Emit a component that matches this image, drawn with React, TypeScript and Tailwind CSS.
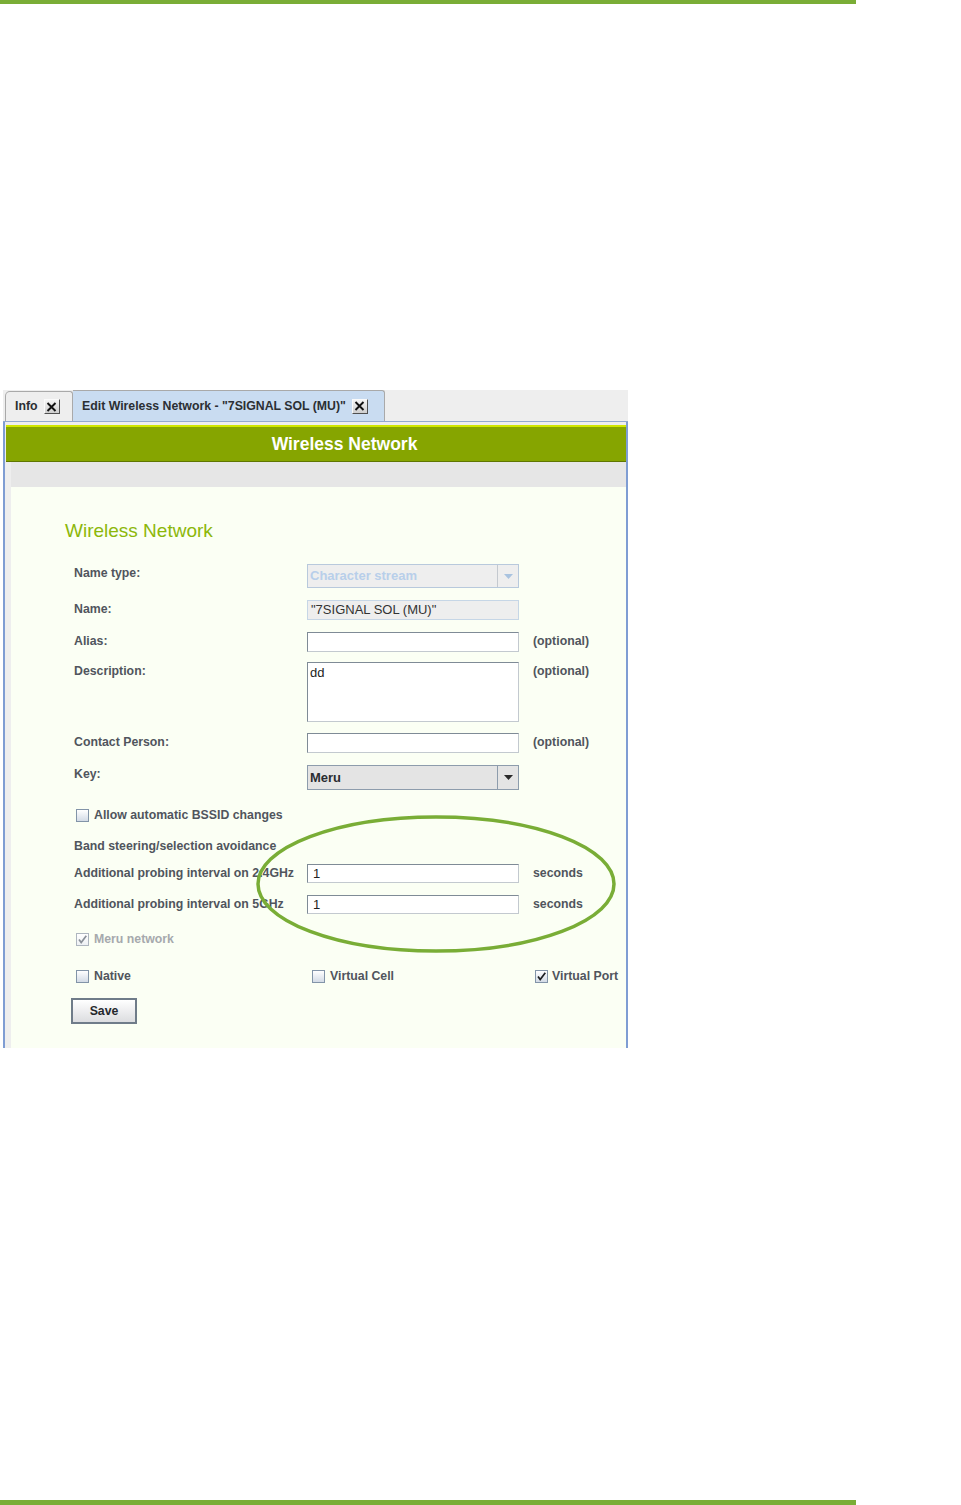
const font = { fontFamily: '"Liberation Sans", Arial, sans-serif' };

function CloseBox() {
  return (
    <span className="inline-flex items-center justify-center w-[16px] h-[15px] bg-linear-to-b from-[#f4f4f4] to-[#cfcfcf] border border-t-[#fafafa] border-l-[#fafafa] border-b-[#505050] border-r-[#505050]">
      <svg width="11" height="10" viewBox="0 0 11 10">
        <path d="M1.5 1 L9.5 9 M9.5 1 L1.5 9" stroke="#111" strokeWidth="1.9" />
      </svg>
    </span>
  );
}

function Check({ disabled }: { disabled?: boolean }) {
  return (
    <svg width="11" height="11" viewBox="0 0 11 11">
      <path d="M2 5.5 L4.2 8.5 L9.3 1.8" fill="none" stroke={disabled ? '#8a9098' : '#1d1f22'} strokeWidth="1.7" />
    </svg>
  );
}

function Box({ checked, disabled }: { checked?: boolean; disabled?: boolean }) {
  return (
    <span
      className={
        'inline-flex items-center justify-center w-[13px] h-[13px] border ' +
        (disabled
          ? 'border-[#aeb6bf] bg-linear-to-b from-white to-[#eef1f4]'
          : 'border-[#8294a8] bg-linear-to-b from-white to-[#d3dbe6]')
      }
    >
      {checked && <Check disabled={disabled} />}
    </span>
  );
}

function Field({ children, h = 'h-[20px]' }: { children?: React.ReactNode; h?: string }) {
  return (
    <div className={`w-[212px] ${h} bg-white border border-t-[#7f8b96] border-l-[#7f8b96] border-b-[#c3c9cf] border-r-[#c3c9cf] px-[4px] text-[13px] text-[#222] leading-[18px]`}>
      {children}
    </div>
  );
}

function Row({ label, children, note, className = '' }: { label: string; children: React.ReactNode; note?: string; className?: string }) {
  return (
    <div className={`flex items-start ${className}`}>
      <div className="w-[233px] leading-[18px]">{label}</div>
      {children}
      {note && <div className="ml-[14px] leading-[18px]">{note}</div>}
    </div>
  );
}

export default function App() {
  return (
    <div className="w-[961px] h-[1505px] bg-white flex flex-col" style={font}>
      <div className="w-[856px] h-[4px] bg-[#7aad36]" />

      <div className="relative w-[625px] h-[658px] ml-[3px] mt-[386px] bg-[#eeeeee] flex flex-col overflow-hidden">
        {/* tabs */}
        <div className="h-[32px] flex items-end pl-[2px] border-b border-[#93a9cf] text-[12.3px] font-bold text-[#2b2f33]">
          <div className="h-[30px] w-[68px] rounded-tl-[5px] rounded-tr-[3px] border border-b-0 border-[#a9a9a9] bg-[#eeeeee] flex items-center pl-[9px] gap-[6px]">
            <span>Info</span>
            <CloseBox />
          </div>
          <div className="h-[31px] w-[312px] rounded-tr-[3px] border border-b-0 border-l-0 border-[#a9a9a9] bg-[#c9dcf1] flex items-center pl-[9px] gap-[6px]">
            <span>Edit Wireless Network - "7SIGNAL SOL (MU)"</span>
            <CloseBox />
          </div>
        </div>

        {/* panel */}
        <div className="flex-1 flex flex-col border-l-2 border-r-2 border-[#7f9dd3]">
          <div className="mt-[3px] ml-[1px] h-[37px] bg-[#86a500] border-t-2 border-[#d0e600] border-b border-b-[#5f7600] flex items-center justify-center pl-[57px] text-white font-bold text-[17.5px]">
            Wireless Network
          </div>
          <div className="ml-[6px] h-[25px] bg-[#e6e6e6]" />
          <div className="ml-[6px] flex-1 bg-[#fbfff4] pl-[63px] text-[12.3px] font-bold text-[#50555d]">
            <div className="mt-[33px] -ml-[9px] text-[19px] font-normal text-[#8cb70a] leading-[22px]">Wireless Network</div>

            <Row label="Name type:" className="mt-[22px]">
              <div className="w-[212px] h-[24px] flex bg-[#eeeeee] border border-[#b8c9dc]">
                <div className="flex-1 pl-[2px] text-[13px] text-[#b8cfea] leading-[22px]">Character stream</div>
                <div className="w-[21px] border-l border-[#c4c9cf] flex items-center justify-center">
                  <svg width="9" height="5" viewBox="0 0 9 5"><path d="M0 0 H9 L4.5 5 Z" fill="#a9c3df" /></svg>
                </div>
              </div>
            </Row>

            <Row label="Name:" className="mt-[12px]">
              <div className="w-[212px] h-[20px] bg-[#eeeeee] border border-[#c6d6e6] px-[3px] text-[13px] font-normal text-[#333] leading-[18px]">
                "7SIGNAL SOL (MU)"
              </div>
            </Row>

            <Row label="Alias:" note="(optional)" className="mt-[12px]">
              <Field />
            </Row>

            <Row label="Description:" note="(optional)" className="mt-[10px]">
              <Field h="h-[60px]">
                <span className="font-normal -ml-[2px] leading-[20px]">dd</span>
              </Field>
            </Row>

            <Row label="Contact Person:" note="(optional)" className="mt-[11px]">
              <Field />
            </Row>

            <Row label="Key:" className="mt-[12px]">
              <div className="w-[212px] h-[25px] flex bg-[#e4e4e4] border border-[#8d9cac]">
                <div className="flex-1 pl-[2px] text-[13px] text-[#2a2d31] leading-[23px]">Meru</div>
                <div className="w-[21px] border-l border-[#8d9cac] flex items-center justify-center">
                  <svg width="9" height="5" viewBox="0 0 9 5"><path d="M0 0 H9 L4.5 5 Z" fill="#2a2a2a" /></svg>
                </div>
              </div>
            </Row>

            <div className="mt-[16px] h-[18px] flex items-center pl-[2px] gap-[5px]">
              <Box />
              <span>Allow automatic BSSID changes</span>
            </div>

            <div className="mt-[13px] h-[18px] leading-[18px]">Band steering/selection avoidance</div>

            <Row label="Additional probing interval on 2.4GHz" note="seconds" className="mt-[9px]">
              <Field h="h-[19px]"><span className="font-normal pl-[1px] leading-[17px]">1</span></Field>
            </Row>

            <Row label="Additional probing interval on 5GHz" note="seconds" className="mt-[12px]">
              <Field h="h-[19px]"><span className="font-normal pl-[1px] leading-[17px]">1</span></Field>
            </Row>

            <div className="mt-[16px] h-[18px] flex items-center pl-[2px] gap-[5px] text-[#a6a9ad]">
              <Box checked disabled />
              <span>Meru network</span>
            </div>

            <div className="mt-[19px] h-[18px] flex items-center pl-[2px]">
              <div className="w-[236px] flex items-center gap-[5px]">
                <Box />
                <span>Native</span>
              </div>
              <div className="w-[223px] flex items-center gap-[5px]">
                <Box />
                <span>Virtual Cell</span>
              </div>
              <div className="flex items-center gap-[4px]">
                <Box checked />
                <span>Virtual Port</span>
              </div>
            </div>

            <button className="mt-[13px] -ml-[3px] w-[66px] h-[26px] border-2 border-[#6f7c89] bg-linear-to-b from-white to-[#dcdde0] text-[12.3px] font-bold text-[#25282c] flex items-center justify-center">
              Save
            </button>
          </div>
        </div>

        {/* highlight ellipse */}
        <svg className="absolute left-[252px] top-[424px]" width="362" height="140" viewBox="0 0 362 140">
          <ellipse cx="181" cy="70" rx="178" ry="67" fill="none" stroke="#79ad36" strokeWidth="3.5" />
        </svg>
      </div>

      <div className="mt-auto w-[856px] h-[5px] bg-[#7aad36]" />
    </div>
  );
}
